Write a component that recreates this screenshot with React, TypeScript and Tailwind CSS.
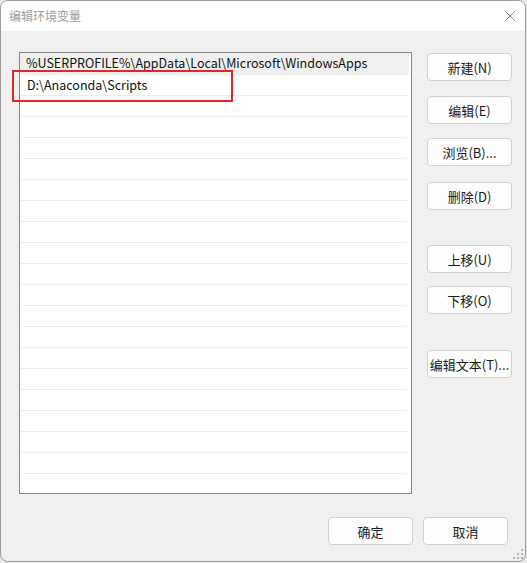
import React from "react";

const font = { fontFamily: '"Noto Sans CJK SC", "Noto Sans", sans-serif' };

function Btn({ label, className = "" }: { label: string; className?: string }) {
  return (
    <div
      className={`w-[85px] h-[28px] flex items-center justify-center bg-[#fdfdfd] border border-[#d0d0d0] rounded-[4px] text-[13px] text-[#1a1a1a] leading-none ${className}`}
    >
      {label}
    </div>
  );
}

export default function App() {
  const rows = Array.from({ length: 21 });
  const sideButtons: [string, string][] = [
    ["新建(N)", "mt-[1px]"],
    ["编辑(E)", "mt-[15px]"],
    ["浏览(B)...", "mt-[14px]"],
    ["删除(D)", "mt-[16px]"],
    ["上移(U)", "mt-[35px]"],
    ["下移(O)", "mt-[13px]"],
    ["编辑文本(T)...", "mt-[36px]"],
  ];
  return (
    <div className="w-[527px] h-[563px] bg-[#e6e6e6] relative overflow-hidden" style={font}>
      <div className="relative w-[526px] h-[562px] border border-[#9c9c9c] rounded-[8px] bg-[#f0f0f0] overflow-hidden flex flex-col">
        {/* Title bar */}
        <div className="h-[30px] bg-white flex items-center justify-between pl-[8px] pr-[9px] shrink-0">
          <span className="text-[12px] text-[#9d9d9d] leading-none">编辑环境变量</span>
          <svg width="12" height="12" viewBox="0 0 12 12">
            <path d="M1 1 L11 11 M11 1 L1 11" stroke="#8a8a8a" strokeWidth="1" fill="none" />
          </svg>
        </div>
        {/* Body */}
        <div className="flex-1 flex flex-col pl-[18px] pt-[21px]">
          <div className="flex">
            <div className="w-[393px] h-[442px] border border-[#848484] bg-white overflow-hidden">
              {rows.map((_, i) => (
                <div
                  key={i}
                  className={`h-[21px] flex items-center pl-[6px] text-[12.5px] leading-none text-[#111] ${
                    i === 0 ? "bg-[#f0f0f0] mr-[2px]" : "border-t border-[#ebebeb] mx-[1px] mr-[4px]"
                  }`}
                >
                  {i === 0 ? "%USERPROFILE%\\AppData\\Local\\Microsoft\\WindowsApps" : i === 1 ? "D:\\Anaconda\\Scripts" : ""}
                </div>
              ))}
            </div>
            <div className="ml-[15px] flex flex-col">
              {sideButtons.map(([l, c]) => (
                <Btn key={l} label={l} className={c} />
              ))}
            </div>
          </div>
          <div className="flex justify-end gap-[10px] pr-[17px] mt-[23px]">
            <Btn label="确定" />
            <Btn label="取消" />
          </div>
        </div>
        {/* Resize grip */}
        <svg className="absolute right-[2px] bottom-[2px]" width="10" height="10" viewBox="0 0 10 10">
          <rect x="8" y="0" width="2" height="2" fill="#b4b4b4" />
          <rect x="4" y="4" width="2" height="2" fill="#b4b4b4" />
          <rect x="8" y="4" width="2" height="2" fill="#b4b4b4" />
          <rect x="0" y="8" width="2" height="2" fill="#b4b4b4" />
          <rect x="4" y="8" width="2" height="2" fill="#b4b4b4" />
          <rect x="8" y="8" width="2" height="2" fill="#b4b4b4" />
        </svg>
      </div>
      {/* Red annotation */}
      <div className="absolute left-[12px] top-[70px] w-[221px] h-[32px] border-2 border-[#e0262b]" />
    </div>
  );
}
